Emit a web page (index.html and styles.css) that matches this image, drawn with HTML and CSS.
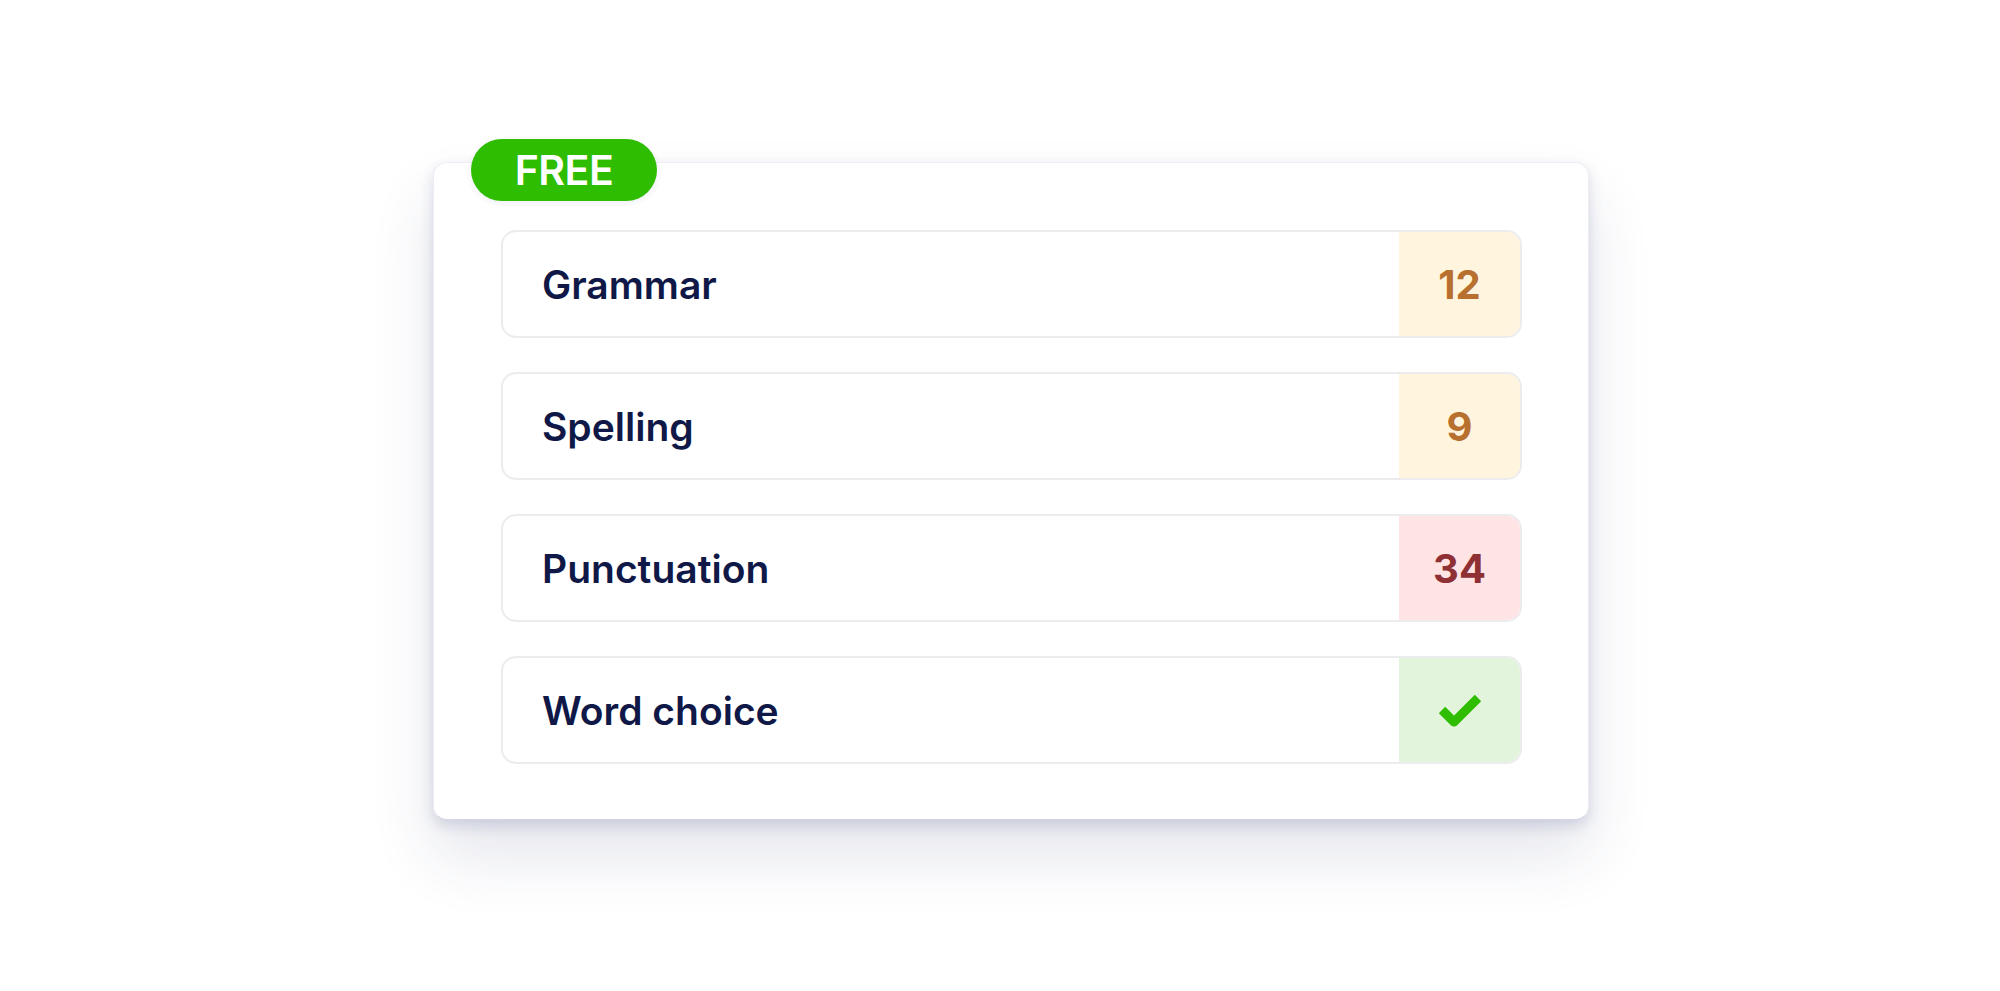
FILE: index.html
```html
<!DOCTYPE html>
<html lang="en">
<head>
    <meta charset="UTF-8">
    <title>Free check</title>
    <link rel="stylesheet" href="styles.css">
</head>
<body>
    <div class="stage">
        <div class="card">
            <span class="badge">FREE</span>

            <div class="row">
                <div class="label">Grammar</div>
                <div class="score warn">12</div>
            </div>
            <div class="row">
                <div class="label">Spelling</div>
                <div class="score warn">9</div>
            </div>
            <div class="row">
                <div class="label">Punctuation</div>
                <div class="score bad">34</div>
            </div>
            <div class="row">
                <div class="label">Word choice</div>
                <div class="score ok">
                    <svg width="44" height="34" viewBox="0 0 44 34">
                        <path d="M4 17 L16 29 L40 5" fill="none" stroke="#2ebd00" stroke-width="9" stroke-linejoin="round"/>
                    </svg>
                </div>
            </div>
        </div>
    </div>
</body>
</html>
```

FILE: styles.css
```css
body {
    margin: 0;
    background-color: #fff;
    font-family: Inter, "Noto Sans", sans-serif;
    color: #0f1846;
}
.stage {
    box-sizing: border-box;
    height: 991px;
    padding: 162px 0 0 433px;
}
.card {
    position: relative;
    box-sizing: border-box;
    width: 1156px;
    height: 658px;
    padding: 67px 66px 0 67px;
    background-color: #fff;
    border: 1px solid #eceef4;
    border-bottom-color: #d3d6e4;
    border-radius: 14px;
    box-shadow: 0 6px 14px rgba(40, 50, 110, 0.16), 0 36px 64px rgba(40, 50, 110, 0.12);
    display: flex;
    flex-direction: column;
    gap: 34px;
}
.badge {
    position: absolute;
    left: 37px;
    top: -24px;
    width: 186px;
    height: 62px;
    border-radius: 31px;
    background-color: #2ebd00;
    color: #fff;
    font-size: 41px;
    font-weight: 600;
    letter-spacing: -0.5px;
    line-height: 62px;
    text-align: center;
    box-shadow: 0 2px 6px rgba(40, 50, 110, 0.08);
}
/* rows */
.row {
    display: flex;
    height: 108px;
    box-sizing: border-box;
    border: 2px solid #ececee;
    border-radius: 15px;
    overflow: hidden;
}
.label {
    flex: 1;
    display: flex;
    align-items: center;
    padding-left: 39px;
    font-size: 39px;
    font-weight: 600;
}
.score {
    width: 121px;
    display: flex;
    align-items: center;
    justify-content: center;
    font-size: 40px;
    font-weight: 700;
}
.warn {
    background-color: #fff5de;
    color: #b8702e;
}
.bad {
    background-color: #fee4e5;
    color: #8e3034;
}
.ok {
    background-color: #e2f5dc;
}
```
